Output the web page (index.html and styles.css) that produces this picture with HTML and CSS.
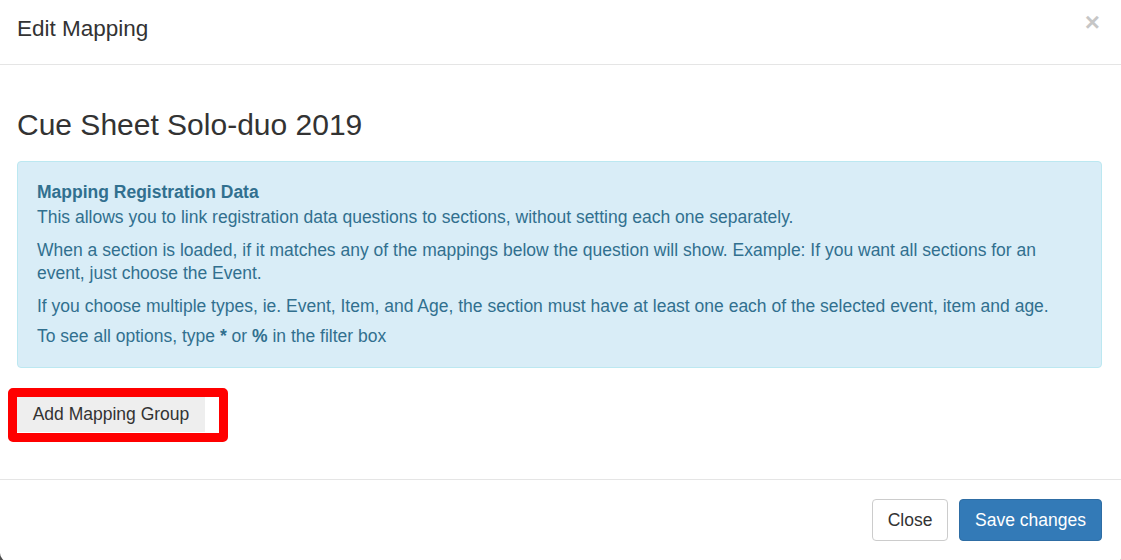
FILE: index.html
```html
<!DOCTYPE html>
<html>
<head>
<meta charset="utf-8">
<link rel="stylesheet" href="styles.css">
</head>
<body>
<div class="modal">
  <div class="modal-header">
    <h4 class="modal-title">Edit Mapping</h4>
    <span class="close">&times;</span>
  </div>
  <div class="modal-body">
    <h3 class="sheet-title">Cue Sheet Solo-duo 2019</h3>
    <div class="alert">
      <strong>Mapping Registration Data</strong>
      <p>This allows you to link registration data questions to sections, without setting each one separately.</p>
      <p>When a section is loaded, if it matches any of the mappings below the question will show. Example: If you want all sections for an event, just choose the Event.</p>
      <p class="p3">If you choose multiple types, ie. Event, Item, and Age, the section must have at least one each of the selected event, item and age.</p>
      <p class="last">To see all options, type <b>*</b> or <b>%</b> in the filter box</p>
    </div>
    <div class="highlight">
      <button class="btn-add">Add Mapping Group</button>
    </div>
  </div>
  <div class="modal-footer">
    <button class="btn btn-default">Close</button>
    <button class="btn btn-primary">Save changes</button>
  </div>
</div>
</body>
</html>
```
FILE: styles.css
```css
* { box-sizing: border-box; }
html, body { margin: 0; padding: 0; }
body {
  background: #4d4d4d;
  font-family: "Liberation Sans", Arial, sans-serif;
  font-size: 17.5px;
  line-height: 23px;
  color: #333;
  width: 1121px;
  height: 560px;
  overflow: hidden;
}
.modal {
  width: 1121px;
  height: 562px;
  background: #fff;
  border-radius: 0 0 4px 9px;
}
.modal-header {
  display: flex;
  justify-content: space-between;
  align-items: flex-start;
  padding: 13px 20px 0 17px;
  height: 65px;
  border-bottom: 1px solid #e5e5e5;
}
.modal-title {
  margin: 0;
  font-size: 22.5px;
  font-weight: normal;
  line-height: 32px;
  color: #333;
}
.close {
  font-size: 26px;
  font-weight: bold;
  line-height: 1;
  color: #000;
  opacity: 0.22;
  margin-top: -4px;
  margin-right: 1px;
}
.modal-body { padding: 43px 19px 0 17px; }
.sheet-title {
  margin: 0 0 20px 0;
  font-size: 30px;
  font-weight: normal;
  line-height: 33px;
  color: #333;
}
.alert {
  background: #d9edf7;
  border: 1px solid #bce8f1;
  color: #31708f;
  border-radius: 4px;
  padding: 19px 19px 0 19px;
  height: 207px;
}
.alert strong { display: block; font-weight: bold; margin-bottom: 2px; }
.alert p { margin: 0 0 10px 0; }
.alert p.p3 { margin-bottom: 7px; }
.alert p.last { margin: 0; }
.highlight {
  margin: 20px 0 0 -9px;
  width: 220px;
  height: 54px;
  border: 9px solid #ff0000;
  border-radius: 5px;
}
.btn-add {
  display: block;
  width: 188px;
  height: 35px;
  border: none;
  background: #eeeeee;
  font-family: "Liberation Sans", Arial, sans-serif;
  font-size: 17.5px;
  color: #333;
  padding: 0 0 1px 0;
  text-align: center;
}
.modal-footer {
  margin-top: 37px;
  border-top: 1px solid #e5e5e5;
  display: flex;
  justify-content: flex-end;
  gap: 11px;
  padding: 19px 19px 0 0;
}
.btn {
  height: 42px;
  font-family: "Liberation Sans", Arial, sans-serif;
  font-size: 17.5px;
  border-radius: 4px;
  padding: 0;
  white-space: nowrap;
  text-align: center;
  border: 1px solid #ccc;
}
.btn-default { background: #fff; color: #333; width: 76px; }
.btn-primary { background: #337ab7; border-color: #2e6da4; color: #fff; width: 143px; }
```
